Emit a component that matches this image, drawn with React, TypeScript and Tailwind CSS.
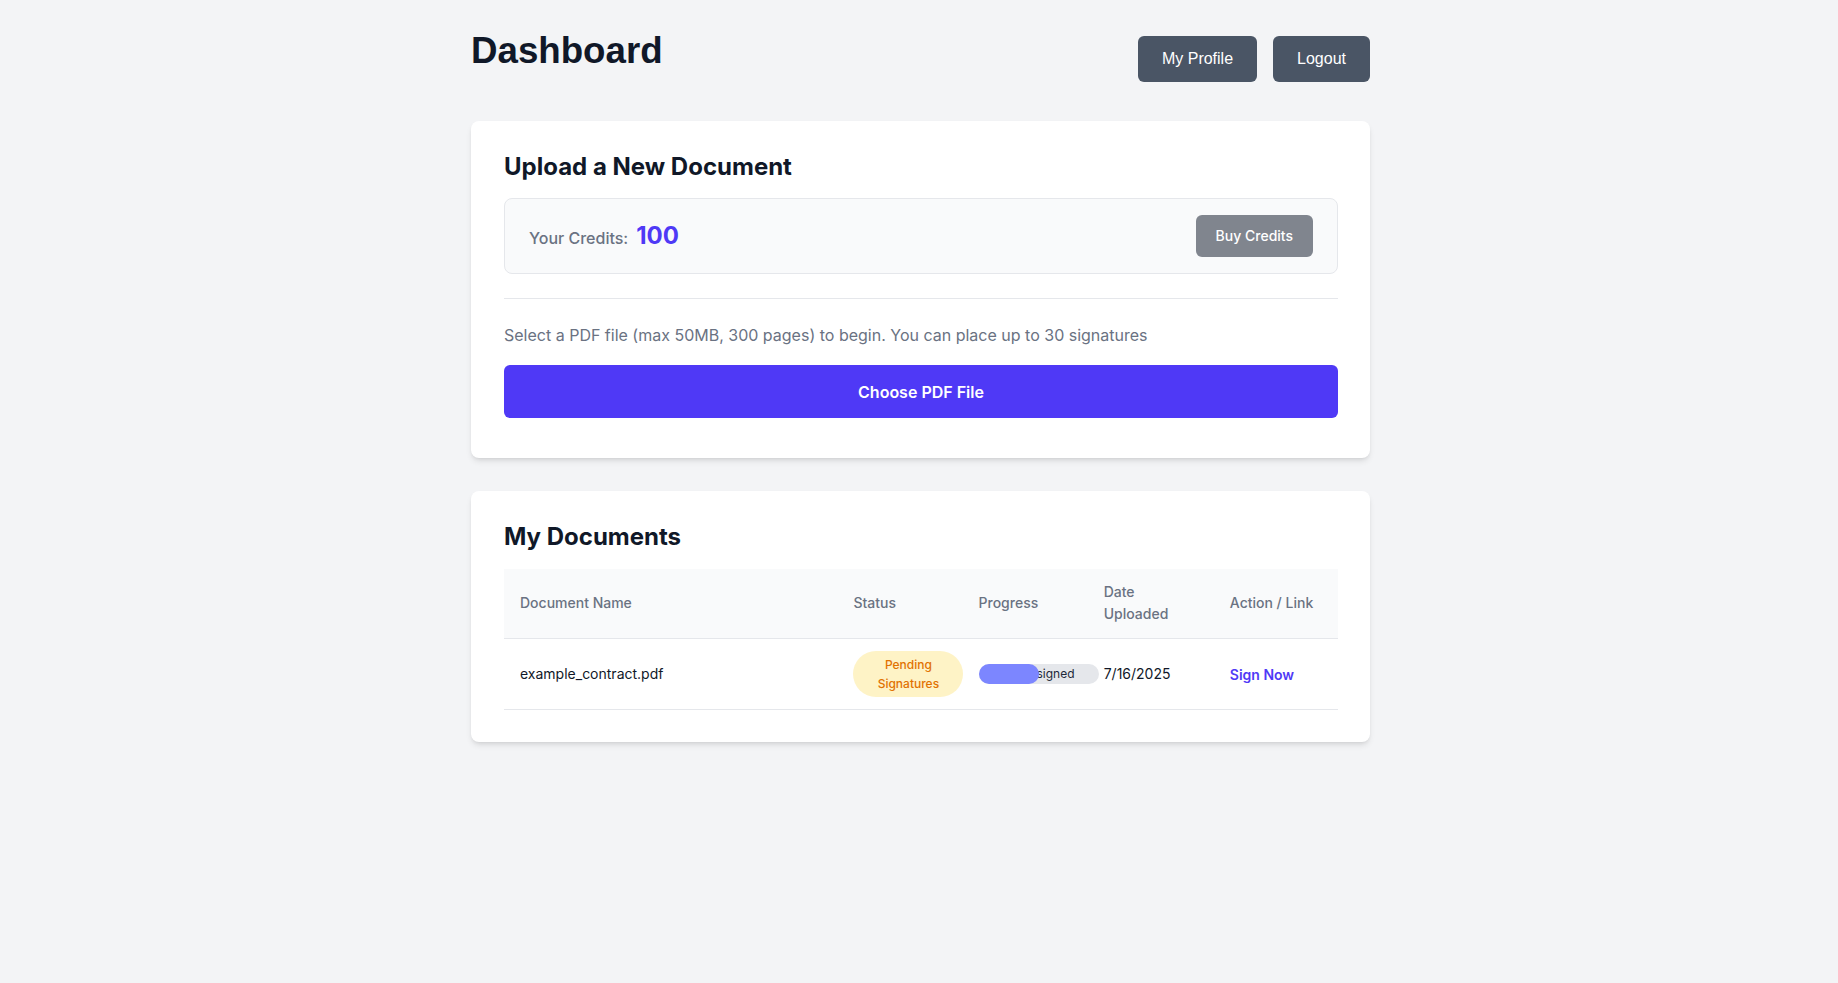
export default function App() {
  return (
    <div className="min-h-screen bg-gray-100 font-['Inter',sans-serif]">
      <div className="max-w-[902px] mx-auto pl-[3px] pt-[31px] pb-10">
        <header className="flex justify-between items-start mb-[39px]">
          <h1 className="text-[36.7px] leading-10 font-bold text-gray-900 font-['Liberation_Sans',Arial,sans-serif]">
            Dashboard
          </h1>
          <div className="flex gap-4 mt-[5px] font-['Liberation_Sans',Arial,sans-serif]">
            <button className="bg-gray-600 text-white px-6 py-3 text-base leading-[22px] rounded-md">
              My Profile
            </button>
            <button className="bg-gray-600 text-white px-6 py-3 text-base leading-[22px] rounded-md">
              Logout
            </button>
          </div>
        </header>

        <section className="bg-white rounded-lg shadow-md pl-[33px] pr-8 pt-[30px] pb-[40px] mb-[33px]">
          <h2 className="text-2xl leading-8 font-bold text-gray-900 mb-[15px]">Upload a New Document</h2>
          <div className="flex items-center justify-between bg-gray-50 border border-gray-200 rounded-lg px-6 py-4">
            <div className="flex items-baseline gap-2">
              <span className="text-base font-medium text-gray-500">Your Credits:</span>
              <span className="text-2xl font-bold text-indigo-600">100</span>
            </div>
            <button className="bg-[#80858e] text-white text-sm font-medium px-5 py-[11px] leading-5 rounded-md">
              Buy Credits
            </button>
          </div>
          <hr className="my-6 border-gray-200" />
          <p className="text-gray-500 text-base leading-6 mb-[18px]">
            Select a PDF file (max 50MB, 300 pages) to begin. You can place up to 30 signatures
          </p>
          <button className="w-full bg-indigo-600 text-white text-base font-semibold py-[14.5px] leading-6 rounded-md">
            Choose PDF File
          </button>
        </section>

        <section className="bg-white rounded-lg shadow-md pl-[33px] pr-8 pt-[30px] pb-8">
          <h2 className="text-2xl leading-8 font-bold text-gray-900 mb-4">My Documents</h2>
          <table className="w-full table-fixed">
            <colgroup>
              <col className="w-[333px]" />
              <col className="w-[125px]" />
              <col className="w-[125px]" />
              <col className="w-[126px]" />
              <col className="w-[124px]" />
            </colgroup>
            <thead>
              <tr className="bg-gray-50 border-b border-gray-200">
                <th className="px-4 py-3 text-left align-middle text-sm leading-[22.4px] font-medium text-gray-500">Document Name</th>
                <th className="px-4 py-3 text-left align-middle text-sm leading-[22.4px] font-medium text-gray-500">Status</th>
                <th className="px-4 py-3 text-left align-middle text-sm leading-[22.4px] font-medium text-gray-500">Progress</th>
                <th className="px-4 py-3 text-left align-middle text-sm leading-[22.4px] font-medium text-gray-500">Date Uploaded</th>
                <th className="px-4 py-3 text-left align-middle text-sm leading-[22.4px] font-medium text-gray-500">Action / Link</th>
              </tr>
            </thead>
            <tbody>
              <tr className="border-b border-gray-200">
                <td className="px-4 py-3 align-middle text-sm text-gray-900 whitespace-nowrap">example_contract.pdf</td>
                <td className="px-4 py-3 align-middle overflow-visible">
                  <span className="inline-block w-[110px] px-3 py-1 rounded-full bg-amber-100 text-amber-600 text-xs leading-[19.2px] text-center font-medium">
                    Pending Signatures
                  </span>
                </td>
                <td className="px-4 py-3 align-middle overflow-visible">
                  <div className="relative w-[120px] h-5 rounded-full bg-gray-200">
                    <span className="absolute inset-0 flex items-center justify-center text-xs text-gray-800 whitespace-nowrap">
                      1 of 2 signed
                    </span>
                    <div className="absolute left-0 top-0 h-full w-1/2 rounded-full bg-indigo-400" />
                  </div>
                </td>
                <td className="px-4 py-3 align-middle text-sm text-gray-900 whitespace-nowrap">7/16/2025</td>
                <td className="px-4 py-3 align-middle">
                  <a href="#" className="text-sm font-semibold text-indigo-600">Sign Now</a>
                </td>
              </tr>
            </tbody>
          </table>
        </section>
      </div>
    </div>
  );
}
